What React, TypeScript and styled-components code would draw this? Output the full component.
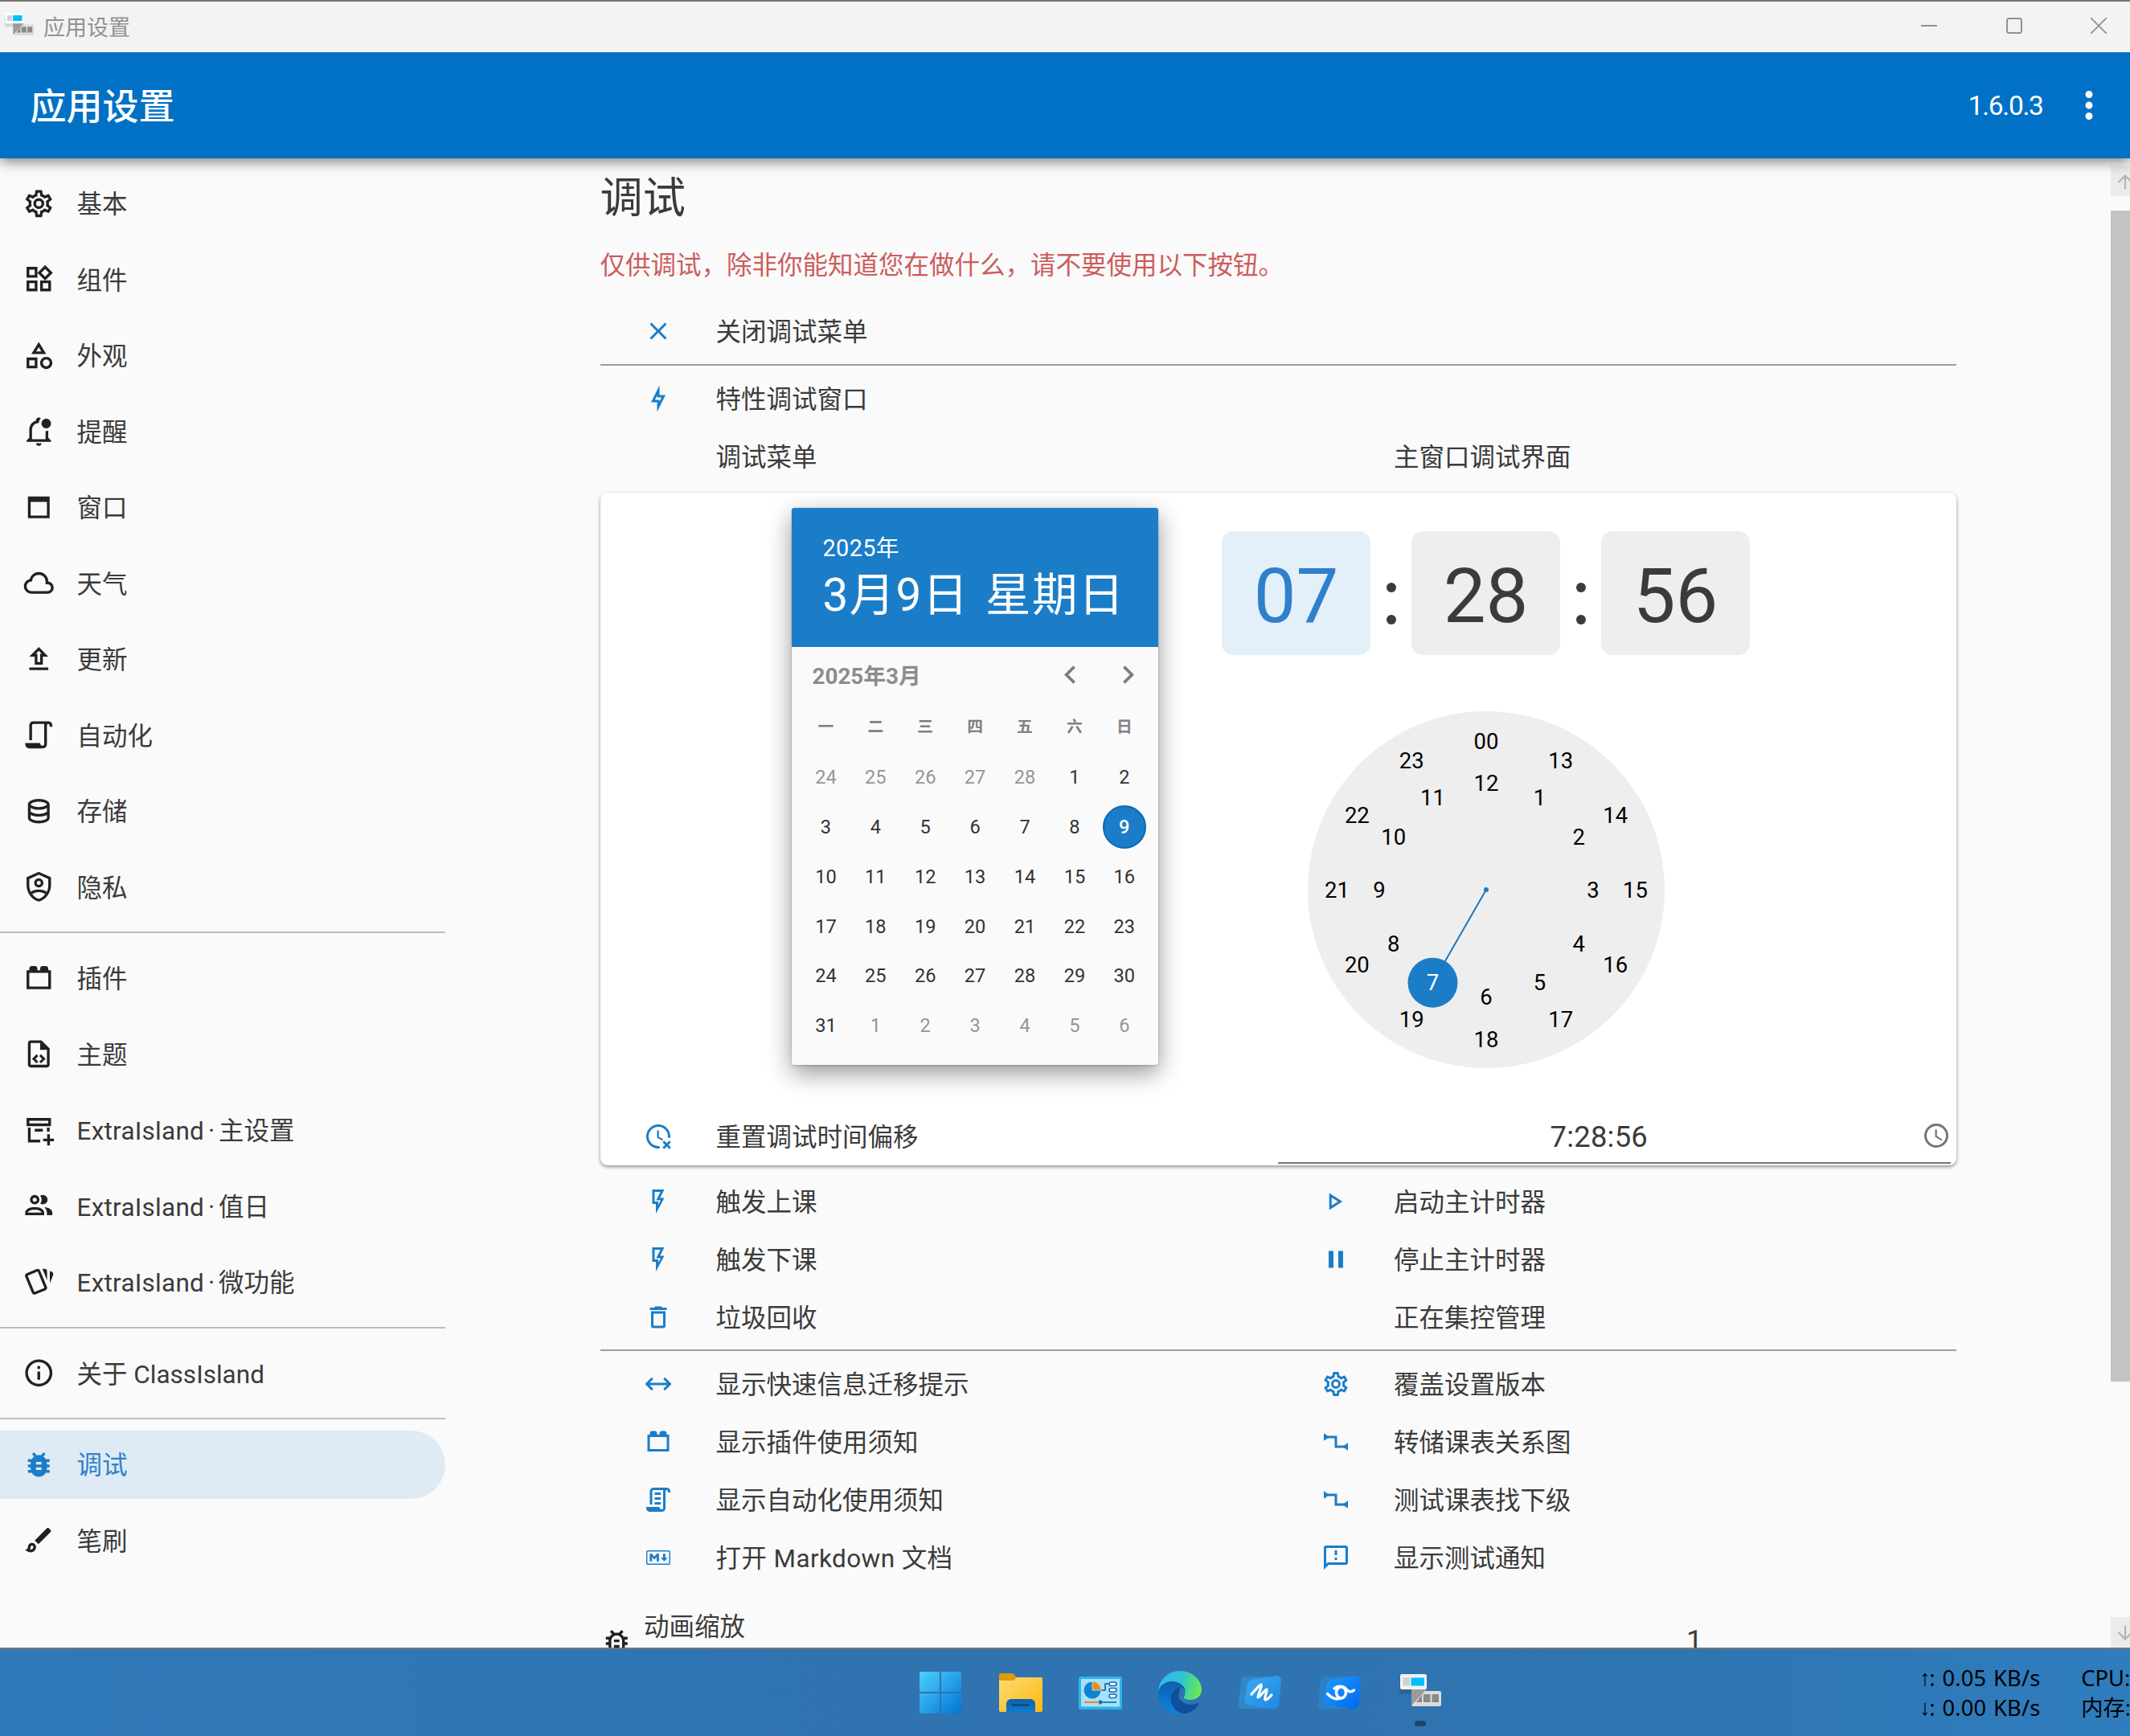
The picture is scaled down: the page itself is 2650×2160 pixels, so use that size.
import React from "react";
import styled, { createGlobalStyle } from "styled-components";

const GlobalStyle = createGlobalStyle`
  * { box-sizing: border-box; }
  html, body { margin: 0; padding: 0; }
  body {
    width: 2650px;
    height: 2160px;
    overflow: hidden;
    background: #2f76b2;
    color: #3b3b3b;
    font-family: Roboto, "Noto Sans CJK SC", sans-serif;
    font-size: 31.5px;
    white-space: nowrap;
  }
`;

/* ---------- icon shapes, all on a 24 unit grid ---------- */

const icons = {
  cog: "M12,8A4,4 0 0,1 16,12A4,4 0 0,1 12,16A4,4 0 0,1 8,12A4,4 0 0,1 12,8M12,10A2,2 0 0,0 10,12A2,2 0 0,0 12,14A2,2 0 0,0 14,12A2,2 0 0,0 12,10M10,22C9.75,22 9.54,21.82 9.5,21.58L9.13,18.93C8.5,18.68 7.96,18.34 7.44,17.94L4.95,18.95C4.73,19.03 4.46,18.95 4.34,18.73L2.34,15.27C2.21,15.05 2.27,14.78 2.46,14.63L4.57,12.97L4.5,12L4.57,11L2.46,9.37C2.27,9.22 2.21,8.95 2.34,8.73L4.34,5.27C4.46,5.05 4.73,4.96 4.95,5.05L7.44,6.05C7.96,5.66 8.5,5.32 9.13,5.07L9.5,2.42C9.54,2.18 9.75,2 10,2H14C14.25,2 14.46,2.18 14.5,2.42L14.87,5.07C15.5,5.32 16.04,5.66 16.56,6.05L19.05,5.05C19.27,4.96 19.54,5.05 19.66,5.27L21.66,8.73C21.79,8.95 21.73,9.22 21.54,9.37L19.43,11L19.5,12L19.43,13L21.54,14.63C21.73,14.78 21.79,15.05 21.66,15.27L19.66,18.73C19.54,18.95 19.27,19.04 19.05,18.95L16.56,17.95C16.04,18.34 15.5,18.68 14.87,18.93L14.5,21.58C14.46,21.82 14.25,22 14,22H10M11.25,4L10.88,6.61C9.68,6.86 8.62,7.5 7.85,8.39L5.44,7.35L4.69,8.65L6.8,10.2C6.4,11.37 6.4,12.64 6.8,13.8L4.68,15.36L5.43,16.66L7.86,15.62C8.63,16.5 9.68,17.14 10.87,17.38L11.24,20H12.76L13.13,17.39C14.32,17.14 15.37,16.5 16.14,15.62L18.57,16.66L19.32,15.36L17.2,13.81C17.6,12.64 17.6,11.37 17.2,10.2L19.31,8.65L18.56,7.35L16.15,8.39C15.38,7.5 14.32,6.86 13.12,6.62L12.75,4H11.25Z",
  widgets: "M16.66,4.52L19.5,7.34L16.66,10.17L13.84,7.34L16.66,4.52M9,5V9H5V5H9M19,15V19H15V15H19M9,15V19H5V15H9M16.66,1.69L11,7.34L16.66,13L22.32,7.34L16.66,1.69M11,3H3V11H11V3M21,13H13V21H21V13M11,13H3V21H11V13Z",
  shapes: "M11,13.5V21.5H3V13.5H11M9,15.5H5V19.5H9V15.5M12,2L17.5,11H6.5L12,2M12,5.86L10.08,9H13.92L12,5.86M17.5,13C20,13 22,15 22,17.5C22,20 20,22 17.5,22C15,22 13,20 13,17.5C13,15 15,13 17.5,13M17.5,15A2.5,2.5 0 0,0 15,17.5A2.5,2.5 0 0,0 17.5,20A2.5,2.5 0 0,0 20,17.5A2.5,2.5 0 0,0 17.5,15Z",
  bell: "M19 17V11.8C18.5 11.9 18 12 17.5 12H17V18H7V11C7 8.2 9.2 6 12 6C12.1 4.7 12.7 3.6 13.5 2.7C13.2 2.3 12.6 2 12 2C10.9 2 10 2.9 10 4V4.3C7 5.2 5 7.9 5 11V17L3 19V20H21V19L19 17M10 21C10 22.1 10.9 23 12 23S14 22.1 14 21H10M21 6.5C21 8.4 19.4 10 17.5 10S14 8.4 14 6.5 15.6 3 17.5 3 21 4.6 21 6.5Z",
  window: "M4,4H20V20H4V4M6,8V18H18V8H6Z",
  cloud: "M6.5 20Q4.22 20 2.61 18.43 1 16.85 1 14.58 1 12.63 2.17 11.1 3.35 9.57 5.25 9.15 5.88 6.85 7.75 5.43 9.63 4 12 4 14.93 4 16.96 6.04 19 8.07 19 11 20.73 11.2 21.86 12.5 23 13.78 23 15.5 23 17.38 21.69 18.69 20.38 20 18.5 20M6.5 18H18.5Q19.55 18 20.27 17.27 21 16.55 21 15.5 21 14.45 20.27 13.73 19.55 13 18.5 13H17V11Q17 8.93 15.54 7.46 14.08 6 12 6 9.93 6 8.46 7.46 7 8.93 7 11H6.5Q5.05 11 4.03 12.03 3 13.05 3 14.5 3 15.95 4.03 17 5.05 18 6.5 18Z",
  upload: "M9,10V16H15V10H19L12,3L5,10H9M12,5.8L14.2,8H13V14H11V8H9.8L12,5.8M19,18H5V20H19V18Z",
  script: "M15,20A1,1 0 0,0 16,19V4H8A1,1 0 0,0 7,5V16H5V5A3,3 0 0,1 8,2H19A3,3 0 0,1 22,5V6H20V5A1,1 0 0,0 19,4A1,1 0 0,0 18,5V9L18,19A3,3 0 0,1 15,22H5A3,3 0 0,1 2,19V18H13A2,2 0 0,0 15,20Z",
  scriptText: "M15,20A1,1 0 0,0 16,19V4H8A1,1 0 0,0 7,5V16H5V5A3,3 0 0,1 8,2H19A3,3 0 0,1 22,5V6H20V5A1,1 0 0,0 19,4A1,1 0 0,0 18,5V9L18,19A3,3 0 0,1 15,22H5A3,3 0 0,1 2,19V18H13A2,2 0 0,0 15,20M9,6H14V8H9V6M9,10H14V12H9V10M9,14H14V16H9V14Z",
  database: "M12 3C7.58 3 4 4.79 4 7V17C4 19.21 7.59 21 12 21S20 19.21 20 17V7C20 4.79 16.42 3 12 3M18 17C18 17.5 15.87 19 12 19S6 17.5 6 17V14.77C7.61 15.55 9.72 16 12 16S16.39 15.55 18 14.77V17M18 12.45C16.7 13.4 14.42 14 12 14C9.58 14 7.3 13.4 6 12.45V9.64C7.47 10.47 9.61 11 12 11C14.39 11 16.53 10.47 18 9.64V12.45M12 9C8.13 9 6 7.5 6 7S8.13 5 12 5C15.87 5 18 6.5 18 7S15.87 9 12 9Z",
  shield: "M21 11C21 16.55 17.16 21.74 12 23C6.84 21.74 3 16.55 3 11V5L12 1L21 5V11M12 21C15.75 20 19 15.54 19 11.22V6.3L12 3.18L5 6.3V11.22C5 15.54 8.25 20 12 21M12 5.8A3.4 3.4 0 0 1 12 12.6A3.4 3.4 0 0 1 12 5.8M12 7.7A1.5 1.5 0 0 0 12 10.7A1.5 1.5 0 0 0 12 7.7M12 14C14.4 14 16.6 14.7 18 15.9L16.8 17.5C15.7 16.6 14 16 12 16C10 16 8.3 16.6 7.2 17.5L6 15.9C7.4 14.7 9.6 14 12 14Z",
  brick: "M19 6V5A2 2 0 0 0 17 3H15A2 2 0 0 0 13 5V6H11V5A2 2 0 0 0 9 3H7A2 2 0 0 0 5 5V6H3V20H21V6M19 18H5V8H19Z",
  fileCode: "M14 2H6C4.89 2 4 2.9 4 4V20C4 21.11 4.89 22 6 22H18C19.11 22 20 21.11 20 20V8L14 2M18 20H6V4H13V9H18V20M9.54 15.65L11.63 17.74L10.35 19L7 15.65L10.35 12.3L11.63 13.56L9.54 15.65M17 15.65L13.65 19L12.38 17.74L14.47 15.65L12.38 13.56L13.65 12.3L17 15.65Z",
  archivePlus: "M3 3H21V9H3ZM5 5V7H19V5ZM4 10H6V19H13.1V21H4ZM18 10H20V13.1H18ZM9 13V11.5A.5 .5 0 0 1 9.5 11H14.5A.5 .5 0 0 1 15 11.5V13ZM18.2 15H20.2V18.2H23.2V20.2H20.2V23.2H18.2V20.2H15.2V18.2H18.2Z",
  people: "M13.07 10.41A5 5 0 0 0 13.07 4.59A3.39 3.39 0 0 1 15 4A3.5 3.5 0 0 1 15 11A3.39 3.39 0 0 1 13.07 10.41M5.5 7.5A3.5 3.5 0 1 1 9 11A3.5 3.5 0 0 1 5.5 7.5M7.5 7.5A1.5 1.5 0 1 0 9 6A1.5 1.5 0 0 0 7.5 7.5M16 17V19H2V17S2 13 9 13 16 17 16 17M14 17C13.86 16.22 12.67 15 9 15S4.07 16.31 4 17M15.95 13A5.32 5.32 0 0 1 18 17V19H22V17S22 13.37 15.94 13Z",
  cards: "M11.19,2.25C10.93,2.25 10.67,2.31 10.42,2.4L3.06,5.45C2.04,5.87 1.55,7.04 1.97,8.05L6.93,20C7.24,20.77 7.97,21.23 8.74,21.25C9,21.25 9.27,21.22 9.53,21.1L16.9,18.05C17.65,17.74 18.11,17 18.13,16.25C18.14,16 18.09,15.71 18,15.45L13,3.5C12.71,2.73 11.97,2.26 11.19,2.25M14.67,2.25L18.12,10.6V4.25A2,2 0 0,0 16.12,2.25M20.13,3.79V12.82L22.56,6.96C22.97,5.94 22.5,4.78 21.47,4.36M11.19,4.22L16.17,16.24L8.78,19.3L3.8,7.29Z",
  info: "M11,9H13V7H11M12,20C7.59,20 4,16.41 4,12C4,7.59 7.59,4 12,4C16.41,4 20,7.59 20,12C20,16.41 16.41,20 12,20M12,2A10,10 0 0,0 2,12A10,10 0 0,0 12,22A10,10 0 0,0 22,12A10,10 0 0,0 12,2M11,17H13V11H11V17Z",
  bug: "M14,12H10V10H14M14,16H10V14H14M20,8H17.19C16.74,7.22 16.12,6.55 15.37,6.04L17,4.41L15.59,3L13.42,5.17C12.96,5.06 12.5,5 12,5C11.5,5 11.04,5.06 10.59,5.17L8.41,3L7,4.41L8.62,6.04C7.88,6.55 7.26,7.22 6.81,8H4V10H6.09C6.04,10.33 6,10.66 6,11V12H4V14H6V15C6,15.34 6.04,15.67 6.09,16H4V18H6.81C7.85,19.79 9.78,21 12,21C14.22,21 16.15,19.79 17.19,18H20V16H17.91C17.96,15.67 18,15.34 18,15V14H20V12H18V11C18,10.66 17.96,10.33 17.91,10H20V8Z",
  bugOutline: "M20,8H17.19C16.74,7.2 16.12,6.5 15.37,6L17,4.41L15.59,3L13.42,5.17C12.96,5.06 12.49,5 12,5C11.51,5 11.04,5.06 10.59,5.17L8.41,3L7,4.41L8.62,6.04C7.88,6.55 7.26,7.22 6.81,8H4V10H6.09C6.04,10.33 6,10.66 6,11V12H4V14H6V15C6,15.34 6.04,15.67 6.09,16H4V18H6.81C8.47,20.87 12.14,21.84 15,20.18C15.91,19.66 16.67,18.9 17.19,18H20V16H17.91C17.96,15.67 18,15.34 18,15V14H20V12H18V11C18,10.66 17.96,10.33 17.91,10H20V8M16,15A4,4 0 0,1 12,19A4,4 0 0,1 8,15V11A4,4 0 0,1 12,7A4,4 0 0,1 16,11V15M14,10V12H10V10H14M10,14H14V16H10V14Z",
  brush: "M7 16C7.55 16 8 16.45 8 17C8 18.1 7.1 19 6 19C5.83 19 5.67 19 5.5 18.95C5.81 18.4 6 17.74 6 17C6 16.45 6.45 16 7 16M18.67 3C18.41 3 18.16 3.1 17.96 3.29L9 12.25L11.75 15L20.71 6.04C21.1 5.65 21.1 5 20.71 4.63L19.37 3.29C19.17 3.09 18.92 3 18.67 3M7 14C5.34 14 4 15.34 4 17C4 18.31 2.84 19 2 19C2.92 20.22 4.5 21 6 21C8.21 21 10 19.21 10 17C10 15.34 8.66 14 7 14Z",
  close: "M19,6.41L17.59,5L12,10.59L6.41,5L5,6.41L10.59,12L5,17.59L6.41,19L12,13.41L17.59,19L19,17.59L13.41,12L19,6.41Z",
  bolt: "M11,9.47V11H14.76L13,14.53V13H9.24L11,9.47M13,1L6,15H11V23L18,9H13V1Z",
  clockRemove: "M11,7H12.5V12.25L16,14.2L15.25,15.45L11,13ZM13.05,19.93A8,8 0 1 1 19.93,13.05C20.6,13.1 21.3,13.2 21.9,13.4A10,10 0 1 0 13.4,21.9C13.2,21.3 13.05,20.6 13.05,19.93ZM22.54,16.88L20.41,19L22.54,21.12L21.12,22.54L19,20.41L16.88,22.54L15.47,21.12L17.59,19L15.47,16.88L16.88,15.47L19,17.59L21.12,15.47Z",
  flash: "M7,2H17L13.5,9H17L10,22V14H7V2M9,4V12H12V14.66L14,11H10.24L13.76,4H9Z",
  trash: "M6,19A2,2 0 0,0 8,21H16A2,2 0 0,0 18,19V7H6V19M8,9H16V19H8V9M15.5,4L14.5,3H9.5L8.5,4H5V6H19V4H15.5Z",
  arrows: "M6.45,17.45L1,12L6.45,6.55L7.86,7.96L4.83,11H19.17L16.14,7.96L17.55,6.55L23,12L17.55,17.45L16.14,16.04L19.17,13H4.83L7.86,16.04L6.45,17.45Z",
  markdown: "M20.56 18H3.44C2.65 18 2 17.37 2 16.59V7.41C2 6.63 2.65 6 3.44 6H20.56C21.35 6 22 6.63 22 7.41V16.59C22 17.37 21.35 18 20.56 18M3.44 6.94C3.18 6.94 2.96 7.15 2.96 7.41V16.6C2.96 16.85 3.18 17.06 3.44 17.06H20.56C20.82 17.06 21.04 16.85 21.04 16.6V7.41C21.04 7.15 20.82 6.94 20.56 6.94H3.44M4.89 15.19V8.81H6.81L8.73 11.16L10.65 8.81H12.58V15.19H10.65V11.53L8.73 13.88L6.81 11.53V15.19H4.89M16.9 15.19L14 12.09H15.94V8.81H17.86V12.09H19.79L16.9 15.19Z",
  play: "M8.5,8.64L13.77,12L8.5,15.36V8.64M6.5,5V19L17.5,12Z",
  pause: "M14,19H18V5H14M6,19H10V5H6V19Z",
  relation: "M2,4.8V11.1L5.2,9H11V17H18.8L22,19.2V12.9L18.8,15H13V7H5.2Z",
  message: "M13,10H11V6H13V10M13,12H11V14H13V12M22,4V16A2,2 0 0,1 20,18H6L2,22V4A2,2 0 0,1 4,2H20A2,2 0 0,1 22,4M20,4H4V17.2L5.2,16H20V4Z",
  clock: "M12,20A8,8 0 0,0 20,12A8,8 0 0,0 12,4A8,8 0 0,0 4,12A8,8 0 0,0 12,20M12,2A10,10 0 0,1 22,12A10,10 0 0,1 12,22C6.47,22 2,17.5 2,12A10,10 0 0,1 12,2M12.5,7V12.25L17,14.92L16.25,16.15L11,13V7H12.5Z",
  chevronLeft: "M15.41,16.58L10.83,12L15.41,7.41L14,6L8,12L14,18L15.41,16.58Z",
  chevronRight: "M8.59,16.58L13.17,12L8.59,7.41L10,6L16,12L10,18L8.59,16.58Z",
  dots: "M12,16A2,2 0 0,1 14,18A2,2 0 0,1 12,20A2,2 0 0,1 10,18A2,2 0 0,1 12,16M12,10A2,2 0 0,1 14,12A2,2 0 0,1 12,14A2,2 0 0,1 10,12A2,2 0 0,1 12,10M12,4A2,2 0 0,1 14,6A2,2 0 0,1 12,8A2,2 0 0,1 10,6A2,2 0 0,1 12,4Z",
};

type IconName = keyof typeof icons;

const Svg = styled.svg`
  display: block;
  flex: none;
  fill: currentColor;
`;

function Icon({ name, size }: { name: IconName; size: number }) {
  return (
    <Svg width={size} height={size} viewBox="0 0 24 24">
      <path fillRule="evenodd" d={icons[name]} />
    </Svg>
  );
}

/* ---------- window frame ---------- */

const Screen = styled.div`
  width: 2650px;
  height: 2160px;
  display: flex;
  flex-direction: column;
  overflow: hidden;
`;

const Window = styled.div`
  height: 2052px;
  flex: none;
  display: flex;
  flex-direction: column;
  background: #fafafa;
  border-top: 2px solid #777576;
  border-bottom: 2px solid #777576;
`;

const TitleBar = styled.div`
  height: 63px;
  flex: none;
  display: flex;
  align-items: center;
  background: #f3f3f3;
  color: #919191;
  font-size: 27px;
  padding: 0 0 3px 3px;
`;

const TitleText = styled.span`
  margin-left: 9px;
  flex: 1;
`;

const CaptionButtons = styled.div`
  display: flex;
  height: 100%;
`;

const CaptionButton = styled.div`
  width: 105.5px;
  display: flex;
  align-items: center;
  justify-content: center;
  &:last-child { margin-right: -14px; }
`;

const AppBar = styled.header`
  height: 132px;
  flex: none;
  display: flex;
  align-items: center;
  background: #0071c5;
  color: #fff;
  padding: 0 24px 0 37.5px;
  box-shadow: 0 3px 16px rgba(0, 0, 0, 0.55);
  clip-path: inset(0 0 -30px 0);
  z-index: 1;
`;

const AppTitle = styled.h1`
  margin: 0;
  padding-bottom: 4px;
  flex: 1;
  font-size: 45px;
  font-weight: 500;
`;

const Version = styled.span`
  font-size: 33.5px;
  letter-spacing: -1.3px;
  margin-right: 30.5px;
  padding-top: 1px;
`;

const Body = styled.div`
  flex: 1;
  min-height: 0;
  display: flex;
  overflow: hidden;
`;

/* ---------- sidebar ---------- */

const Sidebar = styled.nav`
  width: 554px;
  flex: none;
  padding-top: 8.75px;
  display: flex;
  flex-direction: column;
`;

const NavItem = styled.div<{ $active?: boolean }>`
  height: 85px;
  flex: none;
  margin: 4.75px 0;
  padding-left: 28px;
  display: flex;
  align-items: center;
  gap: 27px;
  color: ${(p) => (p.$active ? "#1b7dc8" : "#212121")};
  background: ${(p) => (p.$active ? "#deebf5" : "transparent")};
  border-radius: 0 43px 43px 0;
`;

const NavLabel = styled.span<{ $active?: boolean }>`
  padding-bottom: 4px;
  color: ${(p) => (p.$active ? "#2f80cc" : "#3b3b3b")};
`;

const NavDivider = styled.hr`
  width: 100%;
  height: 2px;
  flex: none;
  margin: 8.5px 0;
  border: 0;
  background: #bdbdbd;
`;

interface NavEntry { icon: IconName; label: string; active?: boolean }

const nav: NavEntry[][] = [
  [
    { icon: "cog", label: "基本" },
    { icon: "widgets", label: "组件" },
    { icon: "shapes", label: "外观" },
    { icon: "bell", label: "提醒" },
    { icon: "window", label: "窗口" },
    { icon: "cloud", label: "天气" },
    { icon: "upload", label: "更新" },
    { icon: "script", label: "自动化" },
    { icon: "database", label: "存储" },
    { icon: "shield", label: "隐私" },
  ],
  [
    { icon: "brick", label: "插件" },
    { icon: "fileCode", label: "主题" },
    { icon: "archivePlus", label: "ExtraIsland · 主设置" },
    { icon: "people", label: "ExtraIsland · 值日" },
    { icon: "cards", label: "ExtraIsland · 微功能" },
  ],
  [{ icon: "info", label: "关于 ClassIsland" }],
  [
    { icon: "bug", label: "调试", active: true },
    { icon: "brush", label: "笔刷" },
  ],
];

/* the separator dot sits tighter than ordinary spaces would put it */
const Dot = styled.span`
  display: inline-block;
  width: 18px;
  text-align: center;
`;

const Head = styled.span`
  letter-spacing: 0.25px;
`;

function Label({ text }: { text: string }) {
  const [head, tail] = text.split(" · ");
  if (!tail) return <>{text}</>;
  return (
    <>
      <Head>{head}</Head>
      <Dot>·</Dot>
      {tail}
    </>
  );
}

/* ---------- content ---------- */

const Main = styled.main`
  flex: 1;
  min-width: 0;
  display: flex;
  justify-content: center;
`;

const Column = styled.div`
  width: 1687px;
`;

const Heading = styled.h2`
  margin: 0;
  height: 90px;
  padding-top: 9px;
  line-height: 82px;
  font-size: 53.2px;
  font-weight: 400;
`;

const Warning = styled.p`
  margin: 0;
  height: 89px;
  line-height: 87px;
  color: #cd5c5c;
`;

const Row = styled.div`
  display: grid;
  grid-template-columns: 1fr 1fr;
`;

const Cell = styled.div`
  height: 72px;
  display: flex;
  align-items: center;
  padding-left: 54px;
  gap: 54px;
`;

const CellLabel = styled.span<{ $wide: boolean }>`
  padding-bottom: 4px;
  letter-spacing: ${(p) => (p.$wide ? "0.4px" : "0")};
`;

const IconSlot = styled.div`
  width: 36px;
  height: 36px;
  color: #1b7dc8;
`;

const Rule = styled.hr`
  height: 2px;
  margin: 4.5px 0 5px;
  border: 0;
  background: #9e9e9e;
`;

const Card = styled.section`
  height: 837px;
  margin: 9px 0;
  background: #fff;
  border-radius: 9px;
  box-shadow: 0 2px 4px rgba(0, 0, 0, 0.42);
  display: flex;
  flex-direction: column;
`;

const Pickers = styled.div`
  height: 765px;
  padding: 19px 0 0 238px;
  display: flex;
  align-items: flex-start;
  gap: 79.5px;
`;

interface Action { icon?: IconName; label: string }

function ActionCell({ icon, label }: Action) {
  return (
    <Cell>
      <IconSlot>{icon && <Icon name={icon} size={36} />}</IconSlot>
      <CellLabel $wide={/[a-z]/.test(label)}>{label}</CellLabel>
    </Cell>
  );
}

/* ---------- calendar ---------- */

const Calendar = styled.div`
  width: 456px;
  height: 693px;
  background: #fafafa;
  border-radius: 3px;
  overflow: hidden;
  box-shadow: 0 10px 30px rgba(0, 0, 0, 0.42), 0 1px 3px rgba(0, 0, 0, 0.2);
`;

const CalendarHead = styled.div`
  height: 173px;
  padding: 30px 39px 0;
  background: #1b7dc8;
  color: #fff;
  display: flex;
  flex-direction: column;
`;

const HeadYear = styled.div`
  font-size: 28.8px;
  line-height: 40px;
  letter-spacing: 0.4px;
`;

const HeadDate = styled.div`
  font-size: 56.5px;
  line-height: 78px;
  letter-spacing: 1.4px;
  word-spacing: 5px;
`;

const MonthBar = styled.div`
  height: 70px;
  padding: 0 14.5px 0 26px;
  display: flex;
  align-items: center;
  color: #8c8c8c;
  font-size: 27.8px;
  font-weight: 700;
`;

const MonthName = styled.span`
  flex: 1;
  padding-bottom: 1px;
`;

const MonthButtons = styled.div`
  display: flex;
  gap: 27px;
  color: #7d7d7d;
`;

const DayGrid = styled.div`
  display: grid;
  grid-template-columns: repeat(7, 61.9px);
  grid-template-rows: 61.8px repeat(6, 61.8px);
  padding: 0 11.5px 0 12px;
  font-size: 23.6px;
`;

const WeekdayCell = styled.div`
  display: flex;
  align-items: center;
  justify-content: center;
  padding-bottom: 5px;
  color: #808080;
  font-size: 19.8px;
  font-weight: 700;
`;

const DayCell = styled.div<{ $muted: boolean }>`
  display: flex;
  align-items: center;
  justify-content: center;
  color: ${(p) => (p.$muted ? "#959595" : "#333")};
`;

const SelectedDay = styled.span`
  width: 54px;
  height: 54px;
  flex: none;
  border-radius: 50%;
  border: 2px solid #0b68b5;
  background: #1b7dc8;
  color: #fff;
  font-weight: 500;
  display: flex;
  align-items: center;
  justify-content: center;
`;

const weekdays = ["一", "二", "三", "四", "五", "六", "日"];
const days = Array.from({ length: 42 }, (_, i) => {
  const n = i - 4;
  if (n < 1) return { n: n + 28, muted: true };
  if (n > 31) return { n: n - 31, muted: true };
  return { n, muted: false };
});

function CalendarPicker() {
  return (
    <Calendar>
      <CalendarHead>
        <HeadYear>2025年</HeadYear>
        <HeadDate>3月9日 星期日</HeadDate>
      </CalendarHead>
      <MonthBar>
        <MonthName>2025年3月</MonthName>
        <MonthButtons>
          <Icon name="chevronLeft" size={45} />
          <Icon name="chevronRight" size={45} />
        </MonthButtons>
      </MonthBar>
      <DayGrid>
        {weekdays.map((d) => (
          <WeekdayCell key={d}>{d}</WeekdayCell>
        ))}
        {days.map((d, i) => (
          <DayCell key={i} $muted={d.muted}>
            {d.n === 9 && !d.muted ? <SelectedDay>{d.n}</SelectedDay> : d.n}
          </DayCell>
        ))}
      </DayGrid>
    </Calendar>
  );
}

/* ---------- clock ---------- */

const ClockPicker = styled.div`
  width: 657px;
  padding-top: 29.5px;
  display: flex;
  flex-direction: column;
  align-items: center;
`;

const Digits = styled.div`
  width: 100%;
  display: flex;
  justify-content: space-between;
`;

const DigitBox = styled.div<{ $active?: boolean }>`
  width: 185px;
  height: 154px;
  border-radius: 14px;
  display: flex;
  align-items: center;
  justify-content: center;
  padding-top: 8px;
  font-size: 94px;
  background: ${(p) => (p.$active ? "#e3f0f9" : "#eee")};
  color: ${(p) => (p.$active ? "#2f80cc" : "#3b3b3b")};
`;

const Colon = styled.div`
  width: 50px;
  height: 154px;
  display: flex;
  flex-direction: column;
  align-items: center;
  justify-content: center;
  gap: 28px;
  padding: 25px 0 0 1px;
`;

const ColonDot = styled.i`
  width: 12px;
  height: 12px;
  border-radius: 50%;
  background: #3b3b3b;
`;

const Face = styled.svg`
  display: block;
  margin-top: 70px;
  font-size: 27.5px;
  fill: #000;
`;

const hours = Array.from({ length: 12 }, (_, i) => i);

function place(hour: number, radius: number) {
  const a = (hour / 12) * Math.PI * 2;
  return { x: 222 + radius * Math.sin(a), y: 222 - radius * Math.cos(a) };
}

function ClockFace() {
  const hand = place(7, 133);
  return (
    <Face width="444" height="444" viewBox="0 0 444 444" textAnchor="middle">
      <circle cx="222" cy="222" r="222" fill="#eee" />
      <circle cx={hand.x} cy={hand.y + 0.5} r="31" fill="#1b7dc8" />
      <circle cx="222" cy="222" r="3" fill="#1b7dc8" />
      <line x1="222" y1="222" x2={hand.x + 6} y2={hand.y - 10} stroke="#1878c5" strokeWidth="2" />
      {hours.map((h) => {
        const outer = place(h, 185.5);
        const inner = place(h, 133);
        return (
          <g key={h}>
            <text x={outer.x} y={outer.y + 10}>{h === 0 ? "00" : h + 12}</text>
            <text x={inner.x} y={inner.y + 10} fill={h === 7 ? "#fff" : "#000"}>
              {h === 0 ? 12 : h}
            </text>
          </g>
        );
      })}
    </Face>
  );
}

/* ---------- time field and slider row ---------- */

const TimeField = styled.div`
  height: 70px;
  margin-right: 7px;
  border-bottom: 2px solid #757575;
  display: flex;
  align-items: center;
  padding-top: 3px;
  font-size: 36.5px;
  color: #3b3b3b;
`;

const TimeValue = styled.span`
  flex: 1;
  text-align: center;
  padding-right: 2px;
  padding-top: 2px;
  letter-spacing: 0.2px;
`;

const FieldIcon = styled.div`
  color: #757575;
`;

const SliderRow = styled.div`
  height: 78px;
  overflow: hidden;
  display: flex;
`;

const SliderIcon = styled.div`
  width: 54.5px;
  padding: 49px 0 0;
  color: #212121;
`;

const SliderLabel = styled.div`
  width: 1297px;
  line-height: 102px;
`;

const SliderValue = styled.div`
  padding-top: 47px;
  font-size: 36px;
`;

/* ---------- scrollbar ---------- */

const ScrollBar = styled.div`
  width: 24px;
  flex: none;
  padding-top: 9px;
  display: flex;
  flex-direction: column;
`;

const ScrollArrow = styled.div`
  height: 38px;
  flex: none;
  background: #ebebeb;
  overflow: hidden;
`;

const Track = styled.div`
  flex: 1;
  padding: 18px 0 0;
`;

const Thumb = styled.div`
  height: 1457px;
  background: #c3c3c3;
`;

function Arrow({ down }: { down?: boolean }) {
  return (
    <ScrollArrow>
      <svg width="36" height="38" viewBox="0 0 36 38" fill="none" stroke="#b4b4b4" strokeWidth="2.2">
        <path d={down ? "M18 11V28M9.5 19L18 27.5L26.5 19" : "M18 29V12M9.5 21L18 12.5L26.5 21"} />
      </svg>
    </ScrollArrow>
  );
}

/* ---------- taskbar ---------- */

const Taskbar = styled.footer`
  flex: 1;
  display: flex;
  align-items: center;
  padding-left: 1120.5px;
  background: linear-gradient(90deg, #3079b8 0%, #2f73b0 45%, #2f75b2 80%, #2f7dbe 100%);
  overflow: hidden;
`;

const TaskButton = styled.div`
  width: 99.4px;
  height: 108px;
  flex: none;
  display: flex;
  flex-direction: column;
  align-items: center;
  justify-content: center;
`;

const Running = styled.i`
  width: 14px;
  height: 7px;
  border-radius: 4px;
  margin: 5px 0 -12px;
  background: #1f4669;
`;

const Tray = styled.div`
  margin: 2px 0 0 572px;
  display: flex;
  gap: 53px;
  color: #000;
  font-family: "Noto Sans", "Noto Sans CJK SC", sans-serif;
  font-size: 27.3px;
  line-height: 36.8px;
`;

const TrayBlock = styled.div`
  width: 148px;
  flex: none;
`;

const TrayLine = styled.div`
  display: flex;
  height: 36.8px;
`;

const Direction = styled.span`
  width: 13.6px;
  margin-right: -1.6px;
  font-family: "Liberation Sans", sans-serif;
`;

const Speed = styled.span`
  word-spacing: 1.5px;
  letter-spacing: 0.15px;
`;

function AppGlyph({ size, muted }: { size: number; muted?: boolean }) {
  return (
    <Svg width={size} height={size} viewBox="0 0 60 60">
      <rect x="4" y="10" width="33" height="22" rx="2" fill="#000" opacity=".12" />
      <rect x="5" y="7" width="33" height="19" rx="2" fill={muted ? "#fff" : "#f2f2f2"} />
      <rect x="8.5" y="11.5" width="8.5" height="10" fill="#cfcfcf" />
      <rect x="18.5" y="11.5" width="16.5" height="10" fill="#00bfff" />
      <rect x="19" y="28" width="37" height="19" rx="2" fill="#dcdcdc" />
      <path d="M19 26H38L19 46Z" fill="#9a9a9a" />
      <path d="M25 42L32 33V42Z" fill="#8a8a8a" />
      <rect x="34" y="32" width="8.5" height="10" fill="#8a8a8a" />
      <rect x="44.5" y="32" width="8.5" height="10" fill="#8a8a8a" />
    </Svg>
  );
}

function StartGlyph() {
  return (
    <Svg width="52" height="52" viewBox="0 0 52 52">
      <defs>
        <linearGradient id="start" x1="0" y1="0" x2="1" y2="1">
          <stop offset="0" stopColor="#4dd0ff" />
          <stop offset="1" stopColor="#0074d4" />
        </linearGradient>
      </defs>
      <path
        fill="url(#start)"
        d="M2 0H25V25H0V2A2 2 0 0 1 2 0ZM27 0H50A2 2 0 0 1 52 2V25H27ZM0 27H25V52H2A2 2 0 0 1 0 50ZM27 27H52V50A2 2 0 0 1 50 52H27Z"
      />
    </Svg>
  );
}

function FolderGlyph() {
  return (
    <Svg width="54" height="48" viewBox="0 0 54 48">
      <defs>
        <linearGradient id="folder" x1="0" y1="0" x2="1" y2="1">
          <stop offset="0" stopColor="#ffdb73" />
          <stop offset="1" stopColor="#fbb80f" />
        </linearGradient>
        <linearGradient id="tray" x1="0" y1="0" x2="0" y2="1">
          <stop offset="0" stopColor="#0f62ab" />
          <stop offset="1" stopColor="#0f7ad3" />
        </linearGradient>
      </defs>
      <path d="M2 0H17L22 5V12H0V2A2 2 0 0 1 2 0Z" fill="#dd9d05" />
      <path d="M0 9H18L22 5H52A2 2 0 0 1 54 7V46A2 2 0 0 1 52 48H2A2 2 0 0 1 0 46Z" fill="url(#folder)" />
      <path d="M9 48V38A6 6 0 0 1 15 32H39A6 6 0 0 1 45 38V48Z" fill="url(#tray)" />
      <rect x="16" y="38.5" width="22" height="2" rx="1" fill="#063f73" />
    </Svg>
  );
}

function ControlPanelGlyph() {
  return (
    <Svg width="54" height="41" viewBox="0 0 54 41">
      <rect width="54" height="41" rx="2" fill="#2cb5ea" />
      <rect x="3" y="3" width="48" height="34.5" fill="#a9e0f7" />
      <circle cx="17" cy="17" r="10.5" fill="#0f83cf" />
      <path d="M17 17V6A11 11 0 0 1 28 17Z" fill="#f28a10" stroke="#a9e0f7" />
      <path d="M28 17H33V9H38" fill="none" stroke="#0b5fa5" strokeWidth="1.6" />
      <g fill="#fff" stroke="#0b6bb8" strokeWidth="1.6">
        <rect x="38" y="7" width="9" height="4.5" rx="2.2" />
        <rect x="38" y="14.5" width="9" height="4.5" rx="2.2" />
        <rect x="38" y="22" width="9" height="4.5" rx="2.2" />
      </g>
      <rect x="7" y="31" width="20" height="2" fill="#f28a10" />
      <rect x="27" y="31" width="20" height="2" fill="#0f83cf" />
      <rect x="25.5" y="29.5" width="3" height="5" fill="#0b5fa5" />
    </Svg>
  );
}

function EdgeGlyph() {
  return (
    <Svg width="54" height="54" viewBox="0 0 54 54">
      <defs>
        <linearGradient id="edgeTop" x1="0" y1=".3" x2="1" y2=".5">
          <stop offset="0" stopColor="#34b8f5" />
          <stop offset=".5" stopColor="#2cc3d0" />
          <stop offset="1" stopColor="#6aea54" />
        </linearGradient>
        <linearGradient id="edgeLeft" x1="0" y1="0" x2="0" y2="1">
          <stop offset="0" stopColor="#0d5fb0" />
          <stop offset="1" stopColor="#0b86e0" />
        </linearGradient>
      </defs>
      <path d="M0 27C0 12 12 0 27 0C43 0 54 12 54 23C54 31 48 36 40 36C34 36 31 34 32 32C36 27 33 17 22 14C11 12 2 18 0 27Z" fill="url(#edgeTop)" />
      <path d="M0 27C1 18 9 13 17 13C26 13 33 19 34 24C30 20 25 20 22 23C13 32 18 48 30 53.5C14 56 0 43 0 27Z" fill="url(#edgeLeft)" />
      <path d="M23 22C16 26 14 34 17 41C20 49 27 54 35 53C42 51 47 47 50 41C51 40 50 39 49 40C43 43 34 43 29 38C24 33 25 28 28 21C26 20.5 24.5 21 23 22Z" fill="#104f9a" />
    </Svg>
  );
}

function TileGlyph({ from, to, children }: { from: string; to: string; children: React.ReactNode }) {
  return (
    <Svg width="54" height="42" viewBox="0 0 54 42">
      <defs>
        <linearGradient id={`tile${from.slice(1)}`} x1="0" y1="0" x2="1" y2="1">
          <stop offset="0" stopColor={from} />
          <stop offset="1" stopColor={to} />
        </linearGradient>
      </defs>
      <path d="M8 1H40L36 41H5Q0 41 0 36L3 6Q3.5 1 8 1Z" fill={from} opacity=".35" />
      <path
        d="M17 5L45 0.5Q53 -0.5 53 6L50.5 35Q49.5 42 43 41.5L13 36.5Q7 35.5 7.5 29L10.5 12Q11.5 6 17 5Z"
        fill={`url(#tile${from.slice(1)})`}
      />
      {children}
    </Svg>
  );
}

const stroke = { fill: "none", stroke: "#fff", strokeLinecap: "round", strokeLinejoin: "round" } as const;

/* ---------- page ---------- */

export default function App() {
  return (
    <>
      <GlobalStyle />
      <Screen>
        <Window>
          <TitleBar>
            <AppGlyph size={42} muted />
            <TitleText>应用设置</TitleText>
            <CaptionButtons>
              <CaptionButton>
                <svg width="20" height="20"><path d="M0 10H20" stroke="#919191" strokeWidth="2" /></svg>
              </CaptionButton>
              <CaptionButton>
                <svg width="20" height="20"><rect x="1" y="1" width="18" height="18" rx="2.5" fill="none" stroke="#919191" strokeWidth="2" /></svg>
              </CaptionButton>
              <CaptionButton>
                <svg width="20" height="20"><path d="M0 0L20 20M20 0L0 20" stroke="#919191" strokeWidth="1.8" /></svg>
              </CaptionButton>
            </CaptionButtons>
          </TitleBar>
          <AppBar>
            <AppTitle>应用设置</AppTitle>
            <Version>1.6.0.3</Version>
            <Icon name="dots" size={54} />
          </AppBar>
          <Body>
            <Sidebar>
              {nav.map((group, g) => (
                <React.Fragment key={g}>
                  {g > 0 && <NavDivider />}
                  {group.map((item) => (
                    <NavItem key={item.label} $active={item.active}>
                      <Icon name={item.icon} size={40.5} />
                      <NavLabel $active={item.active}>
                        <Label text={item.label} />
                      </NavLabel>
                    </NavItem>
                  ))}
                </React.Fragment>
              ))}
            </Sidebar>
            <Main>
              <Column>
                <Heading>调试</Heading>
                <Warning>仅供调试，除非你能知道您在做什么，请不要使用以下按钮。</Warning>
                <Row><ActionCell icon="close" label="关闭调试菜单" /></Row>
                <Rule />
                <Row><ActionCell icon="bolt" label="特性调试窗口" /></Row>
                <Row>
                  <ActionCell label="调试菜单" />
                  <ActionCell label="主窗口调试界面" />
                </Row>
                <Card>
                  <Pickers>
                    <CalendarPicker />
                    <ClockPicker>
                      <Digits>
                        <DigitBox $active>07</DigitBox>
                        <Colon><ColonDot /><ColonDot /></Colon>
                        <DigitBox>28</DigitBox>
                        <Colon><ColonDot /><ColonDot /></Colon>
                        <DigitBox>56</DigitBox>
                      </Digits>
                      <ClockFace />
                    </ClockPicker>
                  </Pickers>
                  <Row>
                    <ActionCell icon="clockRemove" label="重置调试时间偏移" />
                    <TimeField>
                      <TimeValue>7:28:56</TimeValue>
                      <FieldIcon><Icon name="clock" size={36} /></FieldIcon>
                    </TimeField>
                  </Row>
                </Card>
                <Row>
                  <ActionCell icon="flash" label="触发上课" />
                  <ActionCell icon="play" label="启动主计时器" />
                  <ActionCell icon="flash" label="触发下课" />
                  <ActionCell icon="pause" label="停止主计时器" />
                  <ActionCell icon="trash" label="垃圾回收" />
                  <ActionCell label="正在集控管理" />
                </Row>
                <Rule />
                <Row>
                  <ActionCell icon="arrows" label="显示快速信息迁移提示" />
                  <ActionCell icon="cog" label="覆盖设置版本" />
                  <ActionCell icon="brick" label="显示插件使用须知" />
                  <ActionCell icon="relation" label="转储课表关系图" />
                  <ActionCell icon="scriptText" label="显示自动化使用须知" />
                  <ActionCell icon="relation" label="测试课表找下级" />
                  <ActionCell icon="markdown" label="打开 Markdown 文档" />
                  <ActionCell icon="message" label="显示测试通知" />
                </Row>
                <SliderRow>
                  <SliderIcon><Icon name="bugOutline" size={40.5} /></SliderIcon>
                  <SliderLabel>动画缩放</SliderLabel>
                  <SliderValue>1</SliderValue>
                </SliderRow>
              </Column>
            </Main>
            <ScrollBar>
              <Arrow />
              <Track><Thumb /></Track>
              <Arrow down />
            </ScrollBar>
          </Body>
        </Window>
        <Taskbar>
          <TaskButton><StartGlyph /></TaskButton>
          <TaskButton><FolderGlyph /></TaskButton>
          <TaskButton><ControlPanelGlyph /></TaskButton>
          <TaskButton><EdgeGlyph /></TaskButton>
          <TaskButton>
            <TileGlyph from="#38abf7" to="#1f86e0">
              <path {...stroke} strokeWidth="3.2" d="M16 23C20 19 25 12 28 11C30 12 23 26 24 27C26 28 33 16 35 17C36 19 31 29 33 30C36 30 38 27 41 24" />
            </TileGlyph>
          </TaskButton>
          <TaskButton>
            <TileGlyph from="#1f9bff" to="#0068f0">
              <ellipse cx="28.5" cy="21" rx="6" ry="7" {...stroke} strokeWidth="3.4" />
              <path {...stroke} strokeWidth="3.4" d="M11.5 22.5C15 26 21 31 28 28M20 16C24 12 32 12 35 17C37 20 41 21 44.5 18" />
            </TileGlyph>
          </TaskButton>
          <TaskButton>
            <AppGlyph size={60} />
            <Running />
          </TaskButton>
          <Tray>
            <TrayBlock>
              <TrayLine><Direction>↑</Direction><Speed>: 0.05 KB/s</Speed></TrayLine>
              <TrayLine><Direction>↓</Direction><Speed>: 0.00 KB/s</Speed></TrayLine>
            </TrayBlock>
            <TrayBlock>
              <TrayLine>CPU:</TrayLine>
              <TrayLine>内存:</TrayLine>
            </TrayBlock>
          </Tray>
        </Taskbar>
      </Screen>
    </>
  );
}
